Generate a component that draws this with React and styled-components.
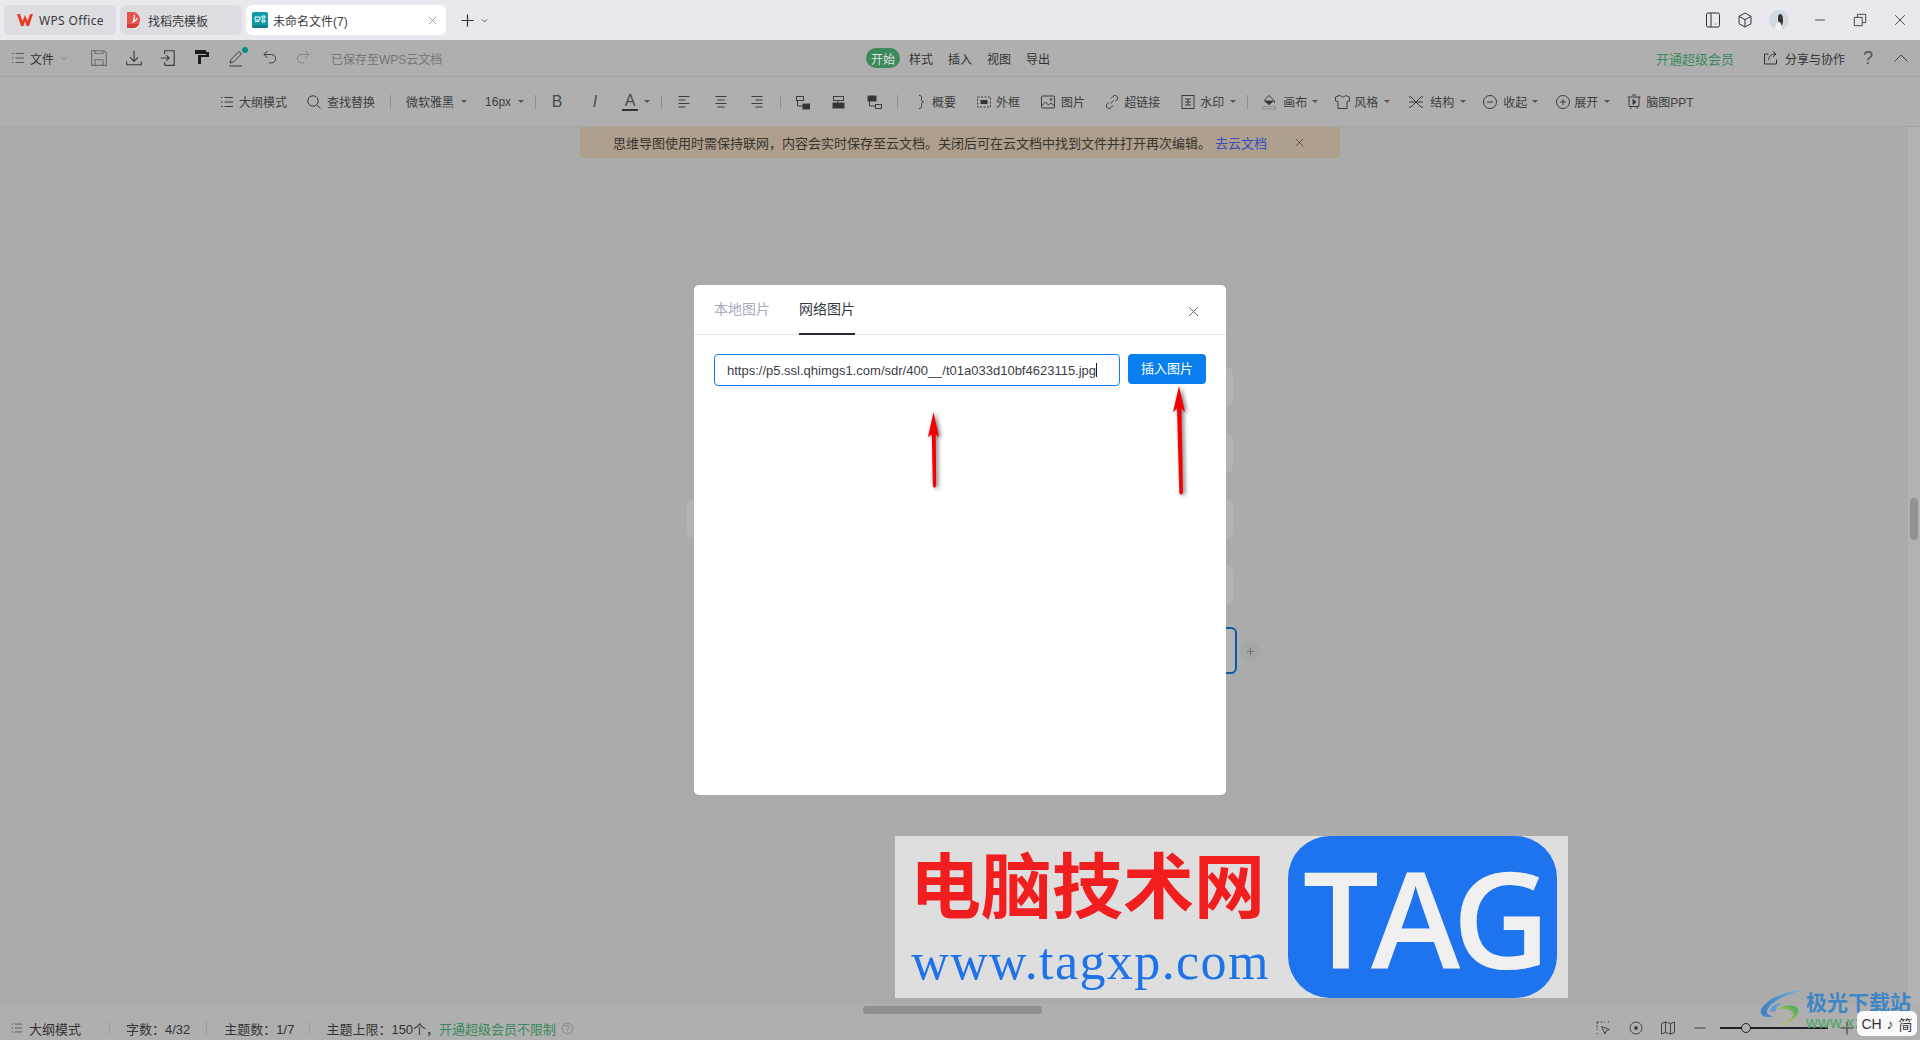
import React from "react";
import styled, { createGlobalStyle } from "styled-components";

const GlobalStyle = createGlobalStyle`
  html, body {
    margin: 0;
    padding: 0;
    height: 100%;
    overflow: hidden;
    background: #ababab;
    font-family: "Liberation Sans", "Noto Sans CJK SC", sans-serif;
  }
  #root { height: 100%; }
`;

const ICONS = {
  lines: <><path d="M2 3.5h1.5M5.5 3.5H14M2 8h1.5M5.5 8H14M2 12.5h1.5M5.5 12.5H14" /></>,
  save: <><path d="M1.5 1.5h11l2 2v11h-13z" /><path d="M4.5 14.5V9.5h7v5M4.5 1.5v2.5h7V1.5" /></>,
  download: <><path d="M8 1.5v9M4.5 7.5 8 11l3.5-3.5M1.5 11v3h13v-3" /></>,
  importFile: <><path d="M5 1.5h8.5v13H5M5 4.5v-3M5 11.5v3M1.5 8H9M6.5 5.5 9 8l-2.5 2.5" /></>,
  undo: <><path d="M5.5 2 2 5.5 5.5 9M2 5.5h7.5a4.2 4.2 0 0 1 0 8.4H7" /></>,
  redo: <><path d="M10.5 2 14 5.5 10.5 9M14 5.5H6.5a4.2 4.2 0 0 0 0 8.4H9" /></>,
  search: <><circle cx="7" cy="7" r="5.2" /><path d="m11 11 3.5 3.5" /></>,
  alignL: <><path d="M2.5 2.5h11M2.5 6h7M2.5 9.5h11M2.5 13h7" /></>,
  alignC: <><path d="M2.5 2.5h11M4.5 6h7M2.5 9.5h11M4.5 13h7" /></>,
  alignR: <><path d="M2.5 2.5h11M6.5 6h7M2.5 9.5h11M6.5 13h7" /></>,
  brace: <><path d="M6 1.5c2.5 0 2.5 1 2.5 3s0 3 2 3.5c-2 .5-2 1.5-2 3.5s0 3-2.5 3" /></>,
  image: <><rect x="1.5" y="2" width="13" height="12" rx="1" /><path d="m1.5 12 4-4 3 3 2.5-2 3.5 3" /><circle cx="11" cy="5.5" r="1" /></>,
  link: <><path d="M6.5 9.5 9.5 6.5M7 4.5l2-2a2.6 2.6 0 0 1 4.5 2.5l-2 2.5M9 11.5l-2 2A2.6 2.6 0 0 1 2.5 11l2-2.5" /></>,
  watermark: <><rect x="2" y="1.5" width="12" height="13" /><path d="M5 5h6M5 8h6M5 11h6M8 5v6" /></>,
  shirt: <><path d="M5.5 1.5 1.5 3v4l2.5.5v7h9v-7l2.5-.5V3l-4-1.500c-.5 2-4.500 2-5 0z" /></>,
  structure: <><path d="M8 8 3 3H1M8 8 3 13H1M8 8l5-5h2M8 8l5 5h2M1 8h14" /></>,
  collapse: <><circle cx="8" cy="8" r="6.5" /><path d="M5 8h6" /></>,
  expand: <><circle cx="8" cy="8" r="6.5" /><path d="M5 8h6M8 5v6" /></>,
  slides: <><path d="M1.5 3h13M3 3v9.5h10V3M5.5 12.5 4.5 15M10.5 12.5l1 2.5M6 1h4" /><path d="M7 5.5 10 8l-3 2.5z" fill="currentColor" /></>,
  share: <><path d="M5.5 4H1.5v10h12V9.500" /><path d="M5.5 10c.5-4 3-6 7-6M10 1.5 13 4l-3 3" /></>,
  close: <><path d="m2.5 2.5 11 11M13.5 2.5l-11 11" /></>,
  phone: <><rect x="1.5" y="1" width="13" height="14" rx="1.5" /><path d="M6 1v14" /><path d="M10.5 12h.8" /></>,
  cube: <><path d="M8 1 14 4.300v7.400L8 15l-6-3.300V4.300zM2 4.300 8 7.700 14 4.300M8 7.700V15" /></>,
  restore: <><path d="M1.5 5h9v9.500h-9zM5 5V1.5h9.500v9.500H10.500" /></>,
  minus: <><path d="M2.5 8h11" /></>,
  plus: <><path d="M1.5 8h13M8 1.5v13" /></>,
  chevronDown: <><path d="m3.5 6 4.5 4.500L12.500 6" /></>,
  chevronUp: <><path d="m1.5 11.500 6.500-6.500 6.500 6.500" /></>,
  help: <><circle cx="8" cy="8" r="6.500" /><path d="M6 6.300a2 2 0 1 1 3 1.700c-.8.5-1 .9-1 1.800M8 11.500v.8" /></>,
  pick: <><path d="M2 2h8M2 2v8M2 13v1M13 2h1" strokeDasharray="2 1.500" /><path d="m6.500 6.500 8 3-3.300 1.200L10 14z" /></>,
  target: <><circle cx="8" cy="8" r="6" /><circle cx="8" cy="8" r="1.500" fill="currentColor" /></>,
  map: <><path d="M1.5 3.500 5.500 2l5 1.500 4-1.500v10.500l-4 1.500-5-1.500-4 1.500zM5.500 2v10.500M10.500 3.500V14" /></>,
};

const Svg = styled.svg`
  display: block;
  flex: none;
  fill: none;
  stroke: currentColor;
  stroke-width: ${(p) => p.$stroke || 1};
  color: ${(p) => p.$color || "#3d3d3d"};
`;

const Icon = ({ name, size = 16, color, stroke }) => (
  <Svg viewBox="0 0 16 16" width={size} height={size} $color={color} $stroke={stroke}>
    {ICONS[name]}
  </Svg>
);

/* title bar */
const TitleBar = styled.header`
  height: 40px;
  flex: none;
  background: #e8e8ee;
  display: flex;
  align-items: center;
  padding: 0 13px 0 4px;
`;

const Tab = styled.div`
  width: ${(p) => p.$w}px;
  height: 30px;
  box-sizing: border-box;
  margin-right: 4px;
  padding-left: ${(p) => p.$pad}px;
  border-radius: 6px;
  background: ${(p) => (p.$active ? "#ffffff" : "#dcdce1")};
  display: flex;
  align-items: center;
  gap: ${(p) => p.$gap}px;
  font-size: 12px;
  color: #3a3a3a;
`;

const TabName = styled.span`
  flex: 1;
  font-family: ${(p) => (p.$latin ? '"Noto Sans", sans-serif' : "inherit")};
  letter-spacing: ${(p) => (p.$latin ? "0.35px" : "0")};
`;

const TabClose = styled.span`
  margin-right: 8px;
`;

const NewTab = styled.div`
  margin-left: 10px;
  display: flex;
  align-items: center;
  gap: 5px;
`;

const WinButtons = styled.div`
  margin-left: auto;
  display: flex;
  align-items: center;
`;

const WinSlot = styled.div`
  margin-left: ${(p) => p.$ml || 0}px;
  display: flex;
`;

/* menu row */
const MenuRow = styled.div`
  height: 37px;
  flex: none;
  background: #afafaf;
  border-bottom: 1px solid #a4a4a4;
  box-sizing: border-box;
  display: grid;
  grid-template-columns: 866px 1fr auto;
  align-items: center;
  font-size: 12px;
  color: #333;
`;

const MenuLeft = styled.div`
  display: flex;
  align-items: center;
  padding-left: 10px;
`;

const FileLabel = styled.span`
  margin: 0 5px 0 4px;
`;

const QuickSlot = styled.div`
  width: ${(p) => p.$w}px;
  display: flex;
  justify-content: center;
  position: relative;
`;

const QuickGroup = styled.div`
  margin-left: 12px;
  display: flex;
`;

const PenDot = styled.i`
  position: absolute;
  top: -2px;
  right: 6px;
  width: 6px;
  height: 6px;
  border-radius: 50%;
  background: #0b8c88;
`;

const SavedNote = styled.span`
  margin-left: 12px;
  color: #757575;
`;

const RibbonTabs = styled.nav`
  display: flex;
  align-items: center;
  gap: 15px;
`;

const RibbonTab = styled.span`
  ${(p) =>
    p.$active &&
    `
    width: 34px;
    height: 20px;
    margin-right: -6px;
    border-radius: 10px;
    background: #3a8a5c;
    color: #e2e2e2;
    display: flex;
    align-items: center;
    justify-content: center;
  `}
`;

const MenuRight = styled.div`
  display: flex;
  align-items: center;
  padding-right: 11px;
`;

const VipLink = styled.span`
  font-size: 13px;
  color: #3a8a5c;
  margin-right: 29px;
`;

const ShareLabel = styled.span`
  margin: 0 15px 0 6px;
`;

const HelpMark = styled.span`
  width: 16px;
  text-align: center;
  font-size: 18px;
  line-height: 20px;
  color: #555;
`;

const CollapseSlot = styled.span`
  margin-left: 17px;
`;

/* tool row */
const ToolRow = styled.div`
  height: 50px;
  flex: none;
  background: #afafaf;
  border-bottom: 1px solid #a4a4a4;
  box-sizing: border-box;
  padding-left: 219px;
  display: flex;
  align-items: center;
  font-size: 12px;
  color: #3d3d3d;
`;

const Tool = styled.div`
  margin-left: ${(p) => p.$ml || 0}px;
  display: flex;
  align-items: center;
  gap: ${(p) => p.$gap || 0}px;
  white-space: nowrap;
`;

const Caret = styled.i`
  margin-left: ${(p) => p.$ml}px;
  width: 0;
  height: 0;
  border-left: 3px solid transparent;
  border-right: 3px solid transparent;
  border-top: 3px solid #555;
`;

const Divider = styled.i`
  margin-left: ${(p) => p.$ml}px;
  width: 1px;
  height: 14px;
  background: #8f8f8f;
`;

const Letter = styled.span`
  width: 16px;
  text-align: center;
  font-size: 16px;
  line-height: 17px;
  color: #4a4a4a;
  font-style: ${(p) => (p.$italic ? "italic" : "normal")};
  border-bottom: ${(p) => (p.$under ? "2px solid #333" : "none")};
`;

/* canvas */
const Canvas = styled.main`
  flex: 1;
  position: relative;
  background: #ababab;
  display: flex;
  justify-content: center;
  align-items: flex-start;
  overflow: hidden;
`;

const Banner = styled.div`
  width: 760px;
  height: 31px;
  background: #ae9f8f;
  border-radius: 0 0 3px 3px;
  box-sizing: border-box;
  padding-left: 33px;
  display: flex;
  align-items: center;
  font-size: 13px;
  color: #38342e;
  white-space: nowrap;
`;

const BannerLink = styled.span`
  margin-left: 4px;
  color: #3550b8;
`;

const BannerClose = styled.span`
  margin-left: 27px;
`;

const MapNode = styled.div`
  position: absolute;
  left: ${(p) => p.$x}px;
  top: ${(p) => p.$y}px;
  width: ${(p) => p.$w}px;
  height: ${(p) => p.$h}px;
  box-sizing: border-box;
  border-radius: 6px;
  background: #b3b3b3;
  border: ${(p) => (p.$selected ? "2px solid #0c58a8" : "1px solid #a9a9a9")};
`;

const AddNode = styled.div`
  position: absolute;
  left: 1240px;
  top: 514px;
  width: 20px;
  height: 20px;
  border-radius: 50%;
  background: #a6a6a6;
  color: #6f7480;
  display: flex;
  align-items: center;
  justify-content: center;
`;

const ScrollTrack = styled.div`
  position: absolute;
  top: 0;
  right: 0;
  bottom: 0;
  width: 12px;
  background: #b2b2b2;
`;

const ScrollThumb = styled.div`
  position: absolute;
  top: 371px;
  left: 2px;
  width: 8px;
  height: 42px;
  border-radius: 4px;
  background: #919191;
`;

const HScroll = styled.div`
  position: absolute;
  left: 863px;
  top: 2px;
  width: 179px;
  height: 8px;
  border-radius: 4px;
  background: #8f8f8f;
`;

/* status bar */
const StatusBar = styled.footer`
  height: 36px;
  flex: none;
  box-sizing: border-box;
  background: #afafaf;
  display: flex;
  align-items: center;
  padding: 12px 0 0 10px;
  font-size: 13px;
  color: #333;
  position: relative;
`;

const StatusText = styled.span`
  margin-left: ${(p) => p.$ml || 0}px;
  color: ${(p) => (p.$green ? "#3a8a5c" : "inherit")};
`;

const StatusDivider = styled.i`
  margin-left: ${(p) => p.$ml}px;
  width: 1px;
  height: 12px;
  background: #9a9a9a;
`;

const HelpSlot = styled.span`
  margin-left: 5px;
`;

const ZoomTools = styled.div`
  margin-left: auto;
  display: flex;
  align-items: center;
  padding-right: 65px;
`;

const ZoomSlot = styled.span`
  margin-left: ${(p) => p.$ml}px;
  display: flex;
`;

const ZoomTrack = styled.div`
  position: relative;
  margin-left: 12px;
  width: 108px;
  height: 2px;
  background: #1f2329;
`;

const ZoomThumb = styled.i`
  position: absolute;
  left: 21px;
  top: -4px;
  width: 10px;
  height: 10px;
  border-radius: 50%;
  box-sizing: border-box;
  border: 1px solid #1f2329;
  background: #afafaf;
`;

/* dialog */
const Overlay = styled.div`
  position: absolute;
  inset: 0;
  display: flex;
  justify-content: center;
  align-items: flex-start;
  padding-top: 285px;
  pointer-events: none;
`;

const Dialog = styled.section`
  position: relative;
  width: 532px;
  height: 510px;
  background: #ffffff;
  border-radius: 5px;
`;

const DialogHead = styled.div`
  height: 50px;
  box-sizing: border-box;
  border-bottom: 1px solid #e6e8eb;
  padding: 0 20px;
  display: flex;
  align-items: stretch;
  gap: 29px;
`;

const DialogTab = styled.div`
  font-size: 14px;
  line-height: 48px;
  height: 50px;
  box-sizing: border-box;
  color: ${(p) => (p.$active ? "#33383f" : "#a3abbd")};
  border-bottom: ${(p) => (p.$active ? "2px solid #262b33" : "none")};
`;

const DialogClose = styled.div`
  margin-left: auto;
  margin-right: 6px;
  align-self: center;
  display: flex;
  padding-top: 3px;
`;

const UrlRow = styled.div`
  padding: 19px 20px 0;
  display: flex;
  align-items: flex-start;
  gap: 8px;
`;

const UrlField = styled.div`
  width: 406px;
  height: 32px;
  box-sizing: border-box;
  border: 1px solid #0a7ff0;
  border-radius: 4px;
  padding-left: 12px;
  display: flex;
  align-items: center;
  font-size: 13px;
  color: #3c4048;
  white-space: nowrap;
`;

const TextCursor = styled.i`
  width: 1px;
  height: 14px;
  background: #1c1c1c;
`;

const InsertButton = styled.button`
  width: 78px;
  height: 30px;
  border: none;
  border-radius: 4px;
  background: #0a7ff0;
  color: #fff;
  font: inherit;
  font-size: 13px;
  padding: 0 0 4px;
`;

const ArrowMark = styled.svg`
  position: absolute;
  left: ${(p) => p.$x}px;
  top: ${(p) => p.$y}px;
  filter: drop-shadow(2px 1px 2px rgba(0, 0, 0, 0.55));
`;

/* pasted site stamp */
const Stamp = styled.div`
  position: absolute;
  left: 895px;
  top: 836px;
  width: 673px;
  height: 162px;
  background: #dedede;
  display: flex;
  pointer-events: none;
`;

const StampText = styled.div`
  width: 393px;
  display: flex;
  flex-direction: column;
  align-items: center;
`;

const StampTitle = styled.div`
  margin: -1px 0 0 -8px;
  font-family: "Noto Sans CJK SC", sans-serif;
  font-weight: 700;
  font-size: 71px;
  line-height: 92px;
  color: #f01e1e;
`;

const StampUrl = styled.div`
  margin: 4px 2px 0 0;
  font-family: "Liberation Serif", serif;
  font-size: 52px;
  line-height: 62px;
  letter-spacing: 1.4px;
  color: #1e73e8;
`;

const StampBadge = styled.div`
  width: 269px;
  height: 162px;
  border-radius: 42px;
  background: #1e73ee;
  color: #f0f0f0;
  font-family: "Open Sans", sans-serif;
  font-weight: 600;
  font-size: 135px;
  line-height: 162px;
  letter-spacing: -8px;
  text-align: center;
`;

const SiteMark = styled.div`
  position: absolute;
  left: 1760px;
  top: 988px;
  display: flex;
  gap: 2px;
  pointer-events: none;
`;

const SiteText = styled.div`
  font-weight: 700;
  font-family: "Noto Sans CJK SC", sans-serif;
  font-size: 21px;
  line-height: 26px;
  color: #3d86c6;
`;

const SiteUrl = styled.div`
  font-family: "Liberation Sans", sans-serif;
  font-weight: 400;
  font-size: 16px;
  line-height: 18px;
  letter-spacing: 0.5px;
  color: #49a862;
`;

const ImeBox = styled.div`
  position: absolute;
  left: 1857px;
  top: 1011px;
  width: 60px;
  height: 25px;
  border-radius: 6px;
  background: rgba(255, 255, 255, 0.93);
  display: flex;
  align-items: center;
  justify-content: center;
  gap: 5px;
  font-size: 14px;
  color: #333;
`;

const Page = styled.div`
  position: relative;
  width: 1920px;
  height: 1040px;
  display: flex;
  flex-direction: column;
  overflow: hidden;
`;

const TOOLS = [
  { ml: 0, gap: 4, icon: "lines", label: "大纲模式" },
  { ml: 19, gap: 5, icon: "search", label: "查找替换" },
  { div: 15 },
  { ml: 15, label: "微软雅黑", caret: 7 },
  { ml: 18, label: "16px", caret: 7 },
  { div: 11 },
  { ml: 13, letter: "B" },
  { ml: 22, letter: "I", italic: true },
  { ml: 19, letter: "A", under: true, caret: 6 },
  { div: 11 },
  { ml: 14, icon: "alignL" },
  { ml: 21, icon: "alignC" },
  { ml: 20, icon: "alignR" },
  { div: 15 },
  { ml: 13, svg: "left" },
  { ml: 20, svg: "mid" },
  { ml: 20, svg: "right" },
  { div: 15 },
  { ml: 15, gap: 3, icon: "brace", label: "概要" },
  { ml: 20, gap: 4, svg: "frame", label: "外框" },
  { ml: 20, gap: 5, icon: "image", label: "图片" },
  { ml: 19, gap: 4, icon: "link", label: "超链接" },
  { ml: 20, gap: 4, icon: "watermark", label: "水印", caret: 6 },
  { div: 11 },
  { ml: 13, gap: 6, svg: "fill", label: "画布", caret: 5 },
  { ml: 16, gap: 4, icon: "shirt", label: "风格", caret: 6 },
  { ml: 18, gap: 6, icon: "structure", label: "结构", caret: 6 },
  { ml: 16, gap: 5, icon: "collapse", label: "收起", caret: 5 },
  { ml: 17, gap: 3, icon: "expand", label: "展开", caret: 6 },
  { ml: 16, gap: 4, icon: "slides", label: "脑图PPT" },
];

const Icon16 = ({ children }) => (
  <Svg viewBox="0 0 16 16" width={16} height={16}>
    {children}
  </Svg>
);

const Arrange = ({ kind }) => {
  if (kind === "frame") {
    return (
      <Icon16>
        <rect x="1.5" y="3" width="13" height="10" strokeDasharray="2 1.5" />
        <rect x="4.5" y="6" width="7" height="4" fill="#333" stroke="none" />
      </Icon16>
    );
  }
  if (kind === "fill") {
    return (
      <Icon16>
        <path d="M8 1.5 13 6.500 8 10.500 3 6.500z" />
        <path d="M4 7h8L8 10.500z" fill="#333" />
        <path d="M13.500 7v2" />
        <path d="M1.5 12.500h13v2.500h-13z" stroke="#8d8d8d" />
      </Icon16>
    );
  }
  const solid = { left: [9, 10, 6, 4], mid: [3, 9, 10, 4], right: [2, 2, 7, 4] }[kind];
  const hollow = { left: [2, 2, 7, 4], mid: [3, 2, 10, 4], right: [9, 10, 6, 4] }[kind];
  return (
    <Icon16>
      <rect x={hollow[0] + 0.5} y={hollow[1] + 0.5} width={hollow[2]} height={hollow[3]} />
      <rect x={solid[0]} y={solid[1]} width={solid[2] + 1} height={solid[3] + 1} fill="#333" />
      <path d={kind === "mid" ? "M8 6.500v2.500" : "M3.500 6.500v5.500h5.500"} />
    </Icon16>
  );
};

const ToolItem = ({ tool }) => {
  if (tool.div) return <Divider $ml={tool.div} />;
  return (
    <Tool $ml={tool.ml} $gap={tool.gap}>
      {tool.icon && <Icon name={tool.icon} />}
      {tool.svg && <Arrange kind={tool.svg} />}
      {tool.letter && (
        <Letter $italic={tool.italic} $under={tool.under}>
          {tool.letter}
        </Letter>
      )}
      {tool.label && <span>{tool.label}</span>}
      {tool.caret && <Caret $ml={tool.caret - (tool.gap || 0)} />}
    </Tool>
  );
};

const NODES = [
  { x: 1000, y: 240, w: 234, h: 40 },
  { x: 1000, y: 306, w: 234, h: 40 },
  { x: 686, y: 372, w: 548, h: 40 },
  { x: 1000, y: 438, w: 234, h: 40 },
  { x: 1000, y: 500, w: 237, h: 47, selected: true },
];

const QUICK = [
  { w: 35, icon: "save", color: "#6d6d6d", size: 18 },
  { w: 35, icon: "download", size: 18 },
  { w: 34, icon: "importFile", size: 18 },
];

const App = () => {
  return (
    <Page>
      <GlobalStyle />

      <TitleBar>
        <Tab $w={112} $pad={13} $gap={6}>
          <svg width="16" height="12" viewBox="0 0 16 12">
            <path d="M0 0h3l2.5 7L8 1l2.5 6L13 0h3l-4 12h-2.500L8 7l-1.500 5H4z" fill="#ec3a28" />
          </svg>
          <TabName $latin>WPS Office</TabName>
        </Tab>
        <Tab $w={122} $pad={7} $gap={7}>
          <svg width="14" height="16" viewBox="0 0 14 16">
            <path d="M0 0h6a7 8 0 0 1 0 16H0z" fill="#e8534e" />
            <path d="M0 12h12a7 8 0 0 1-6 4H0z" fill="#d63a36" />
            <path d="M7 3c1 2 .5 4-1 7 2-1 4-2 4-4" stroke="#fff" strokeWidth="1.3" fill="none" />
          </svg>
          <TabName>找稻壳模板</TabName>
        </Tab>
        <Tab $w={200} $pad={6} $gap={5} $active>
          <svg width="16" height="16" viewBox="0 0 16 16">
            <rect width="16" height="16" rx="2" fill="#0e9aa7" />
            <path d="M3 5h5v3H3zM3 9.500h4M10 4h3v2h-3zM10 8h3v2h-3z" stroke="#fff" fill="none" />
            <path d="M0 13h16v1a2 2 0 0 1-2 2H2a2 2 0 0 1-2-2z" fill="#0b7f8a" />
          </svg>
          <TabName>未命名文件(7)</TabName>
          <TabClose>
            <Icon name="close" size={11} color="#808080" />
          </TabClose>
        </Tab>
        <NewTab>
          <Icon name="plus" size={15} color="#333" stroke={1.3} />
          <Icon name="chevronDown" size={9} color="#444" stroke={1.5} />
        </NewTab>
        <WinButtons>
          <WinSlot>
            <Icon name="phone" color="#333" />
          </WinSlot>
          <WinSlot $ml={16}>
            <Icon name="cube" color="#333" />
          </WinSlot>
          <WinSlot $ml={16}>
            <svg width="20" height="20" viewBox="0 0 20 20">
              <circle cx="10" cy="10" r="10" fill="#cfdbe0" />
              <path d="M11 4c3 0 3 4 3 7s-1 5-3 6c1-3-2-5-2-7s0-6 2-6z" fill="#3a3233" />
              <path d="M6 20c0-5 2-8 4-8s3 4 3 8z" fill="#eef3f5" />
            </svg>
          </WinSlot>
          <WinSlot $ml={24}>
            <Icon name="minus" size={14} color="#333" />
          </WinSlot>
          <WinSlot $ml={26}>
            <Icon name="restore" size={14} color="#333" />
          </WinSlot>
          <WinSlot $ml={26}>
            <Icon name="close" size={14} color="#333" />
          </WinSlot>
        </WinButtons>
      </TitleBar>

      <MenuRow>
        <MenuLeft>
          <Icon name="lines" color="#5d5d5d" />
          <FileLabel>文件</FileLabel>
          <Icon name="chevronDown" size={10} color="#666" />
          <QuickGroup>
            {QUICK.map((q) => (
              <QuickSlot key={q.icon} $w={q.w}>
                <Icon name={q.icon} size={q.size} color={q.color} />
              </QuickSlot>
            ))}
            <QuickSlot $w={34}>
              <svg width="16" height="16" viewBox="0 0 16 16">
                <path d="M1 1h11v2h3v5H7v7H4V6h8V5H1z" fill="#1c1c1c" />
              </svg>
            </QuickSlot>
            <QuickSlot $w={35}>
              <svg width="18" height="18" viewBox="0 0 18 18" fill="none" stroke="#3d3d3d">
                <path d="m2 14 1-3.500L11 2.500l2.500 2.500-8 8zM1 17h13" />
              </svg>
              <PenDot />
            </QuickSlot>
            <QuickSlot $w={32}>
              <Icon name="undo" color="#3d3d3d" />
            </QuickSlot>
            <QuickSlot $w={33}>
              <Icon name="redo" color="#858585" />
            </QuickSlot>
          </QuickGroup>
          <SavedNote>已保存至WPS云文档</SavedNote>
        </MenuLeft>
        <RibbonTabs>
          <RibbonTab $active>开始</RibbonTab>
          <RibbonTab>样式</RibbonTab>
          <RibbonTab>插入</RibbonTab>
          <RibbonTab>视图</RibbonTab>
          <RibbonTab>导出</RibbonTab>
        </RibbonTabs>
        <MenuRight>
          <VipLink>开通超级会员</VipLink>
          <Icon name="share" color="#333" />
          <ShareLabel>分享与协作</ShareLabel>
          <HelpMark>?</HelpMark>
          <CollapseSlot>
            <Icon name="chevronUp" color="#444" />
          </CollapseSlot>
        </MenuRight>
      </MenuRow>

      <ToolRow>
        {TOOLS.map((tool, i) => (
          <ToolItem key={i} tool={tool} />
        ))}
      </ToolRow>

      <Canvas>
        <Banner>
          思维导图使用时需保持联网，内容会实时保存至云文档。关闭后可在云文档中找到文件并打开再次编辑。
          <BannerLink>去云文档</BannerLink>
          <BannerClose>
            <Icon name="close" size={11} color="#333" />
          </BannerClose>
        </Banner>
        {NODES.map((n) => (
          <MapNode key={n.y} $x={n.x} $y={n.y} $w={n.w} $h={n.h} $selected={n.selected} />
        ))}
        <AddNode>
          <Icon name="plus" size={9} color="#6f7480" stroke={2} />
        </AddNode>
        <ScrollTrack>
          <ScrollThumb />
        </ScrollTrack>
      </Canvas>

      <StatusBar>
        <HScroll />
        <Icon name="lines" size={14} color="#555" />
        <StatusText $ml={5}>大纲模式</StatusText>
        <StatusDivider $ml={28} />
        <StatusText $ml={16}>字数：4/32</StatusText>
        <StatusDivider $ml={16} />
        <StatusText $ml={17}>主题数：1/7</StatusText>
        <StatusDivider $ml={15} />
        <StatusText $ml={16}>主题上限：150个，</StatusText>
        <StatusText $green>开通超级会员不限制</StatusText>
        <HelpSlot>
          <Icon name="help" size={13} color="#7d7d7d" />
        </HelpSlot>
        <ZoomTools>
          <Icon name="pick" color="#444" />
          <ZoomSlot $ml={17}>
            <Icon name="target" color="#444" />
          </ZoomSlot>
          <ZoomSlot $ml={16}>
            <Icon name="map" color="#444" />
          </ZoomSlot>
          <ZoomSlot $ml={16}>
            <Icon name="minus" color="#666" stroke={1.5} />
          </ZoomSlot>
          <ZoomTrack>
            <ZoomThumb />
          </ZoomTrack>
          <ZoomSlot $ml={11}>
            <Icon name="plus" color="#333" />
          </ZoomSlot>
        </ZoomTools>
      </StatusBar>

      <Overlay>
        <Dialog>
          <DialogHead>
            <DialogTab>本地图片</DialogTab>
            <DialogTab $active>网络图片</DialogTab>
            <DialogClose>
              <Icon name="close" size={13} color="#555" />
            </DialogClose>
          </DialogHead>
          <UrlRow>
            <UrlField>
              https://p5.ssl.qhimgs1.com/sdr/400__/t01a033d10bf4623115.jpg
              <TextCursor />
            </UrlField>
            <InsertButton>插入图片</InsertButton>
          </UrlRow>
          <ArrowMark $x={228} $y={120} width="24" height="90" viewBox="0 0 24 90">
            <polygon points="11.5,7 17,32 13.8,29.5 14.2,81 12.5,83 10.8,81 9.800,29.5 6,32" fill="#f40000" />
          </ArrowMark>
          <ArrowMark $x={474} $y={95} width="24" height="122" viewBox="0 0 24 122">
            <polygon points="11,6 17,32 13.5,28.5 15,113 13,115 11.3,113 9,28.5 5,32" fill="#f40000" />
          </ArrowMark>
        </Dialog>
      </Overlay>

      <Stamp>
        <StampText>
          <StampTitle>电脑技术网</StampTitle>
          <StampUrl>www.tagxp.com</StampUrl>
        </StampText>
        <StampBadge>TAG</StampBadge>
      </Stamp>

      <SiteMark>
        <svg width="44" height="40" viewBox="0 0 44 40">
          <defs>
            <linearGradient id="swirlBlue" x1="0" y1="0" x2="1" y2="0">
              <stop offset="0" stopColor="#3f7fc4" />
              <stop offset="1" stopColor="#6ab7dc" />
            </linearGradient>
            <linearGradient id="swirlGreen" x1="0" y1="1" x2="1" y2="0">
              <stop offset="0" stopColor="#e6cf48" />
              <stop offset="1" stopColor="#3fa85e" />
            </linearGradient>
          </defs>
          <path d="M43 2C24 3 5 12 1 22c-2 6 6 9 12 6C5 27 5 22 12 16 20 9 32 5 43 2z" fill="url(#swirlBlue)" />
          <path d="M17 21c8-5 18-5 21 0 3 6-8 14-20 18 9-5 18-11 15-15-3-3-10-4-16-3z" fill="url(#swirlGreen)" />
          <path d="M10 23c1-6 9-9 14-7-5 0-9 3-8 7-2 1-4 1-6 0z" fill="#5a9bd1" />
        </svg>
        <SiteText>
          极光下载站
          <SiteUrl>www.xz7.com</SiteUrl>
        </SiteText>
      </SiteMark>

      <ImeBox>
        <span>CH</span>
        <span>♪</span>
        <span>简</span>
      </ImeBox>
    </Page>
  );
};

export default App;
